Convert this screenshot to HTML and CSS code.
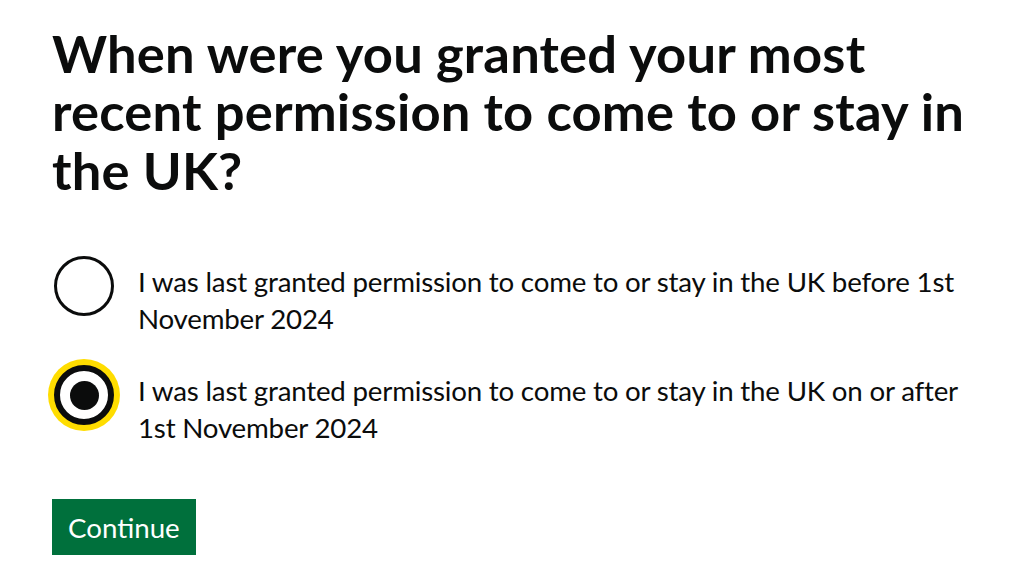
FILE: index.html
```html
<!DOCTYPE html>
<html lang="en">
<head>
<meta charset="utf-8">
<title>When were you granted your most recent permission</title>
<link rel="stylesheet" href="styles.css">
</head>
<body>
<main class="page">
  <form class="question-form">
    <fieldset class="fieldset">
      <legend class="legend">
        <h1 class="heading">When were you granted your most recent permission to come to or stay in the UK?</h1>
      </legend>
      <div class="radios">
        <div class="radio-item">
          <input class="radio-input" id="when-1" name="when" type="radio" value="before">
          <label class="radio-label" for="when-1">I was last granted permission to come to or stay in the UK before 1st November 2024</label>
        </div>
        <div class="radio-item">
          <input class="radio-input is-focused" id="when-2" name="when" type="radio" value="after" checked>
          <label class="radio-label" for="when-2">I was last granted permission to come to or stay in the UK on or after 1st November 2024</label>
        </div>
      </div>
    </fieldset>
    <button class="button" type="submit">Continue</button>
  </form>
</main>
</body>
</html>
```

FILE: styles.css
```css
html, body {
  margin: 0;
  padding: 0;
  background: #ffffff;
}

body {
  font-family: Lato, "Liberation Sans", Arial, sans-serif;
  color: #0b0c0c;
}

.page {
  padding: 24px 0 0 52px;
  width: 950px;
}

.fieldset {
  border: 0;
  margin: 0;
  padding: 0;
  min-width: 0;
}

.legend {
  padding: 0;
  margin: 0;
}

.heading {
  margin: 0 0 57px;
  font-size: 52.5px;
  line-height: 58.4px;
  font-weight: 700;
  letter-spacing: 0.2px;
}

.radios {
  display: flex;
  flex-direction: column;
  gap: 16px;
}

.radio-item {
  display: flex;
  align-items: flex-start;
  padding-left: 2px;
}

.radio-input {
  appearance: none;
  -webkit-appearance: none;
  flex: 0 0 auto;
  box-sizing: border-box;
  width: 60px;
  height: 60px;
  margin: 0;
  border: 3px solid #0b0c0c;
  border-radius: 50%;
  background: #ffffff;
  position: relative;
}

.radio-input:checked::after {
  content: "";
  position: absolute;
  left: 50%;
  top: 50%;
  width: 29px;
  height: 29px;
  margin: -14.5px 0 0 -14.5px;
  border-radius: 50%;
  background: #0b0c0c;
}

.radio-input.is-focused {
  border-width: 6px;
  box-shadow: 0 0 0 6px #ffdd00;
}

.radio-label {
  padding: 8px 22px 12px 24px;
  font-size: 27.7px;
  line-height: 36.5px;
  font-weight: 400;
  letter-spacing: -0.2px;
}

.button {
  margin-top: 41px;
  box-sizing: border-box;
  font-family: inherit;
  font-size: 27.7px;
  line-height: 1;
  font-weight: 400;
  color: #ffffff;
  background: #00703c;
  border: 3px solid transparent;
  border-radius: 0;
  padding: 12px 13px 10px;
  box-shadow: 0 3px 0 #002d18;
  cursor: pointer;
}
```
